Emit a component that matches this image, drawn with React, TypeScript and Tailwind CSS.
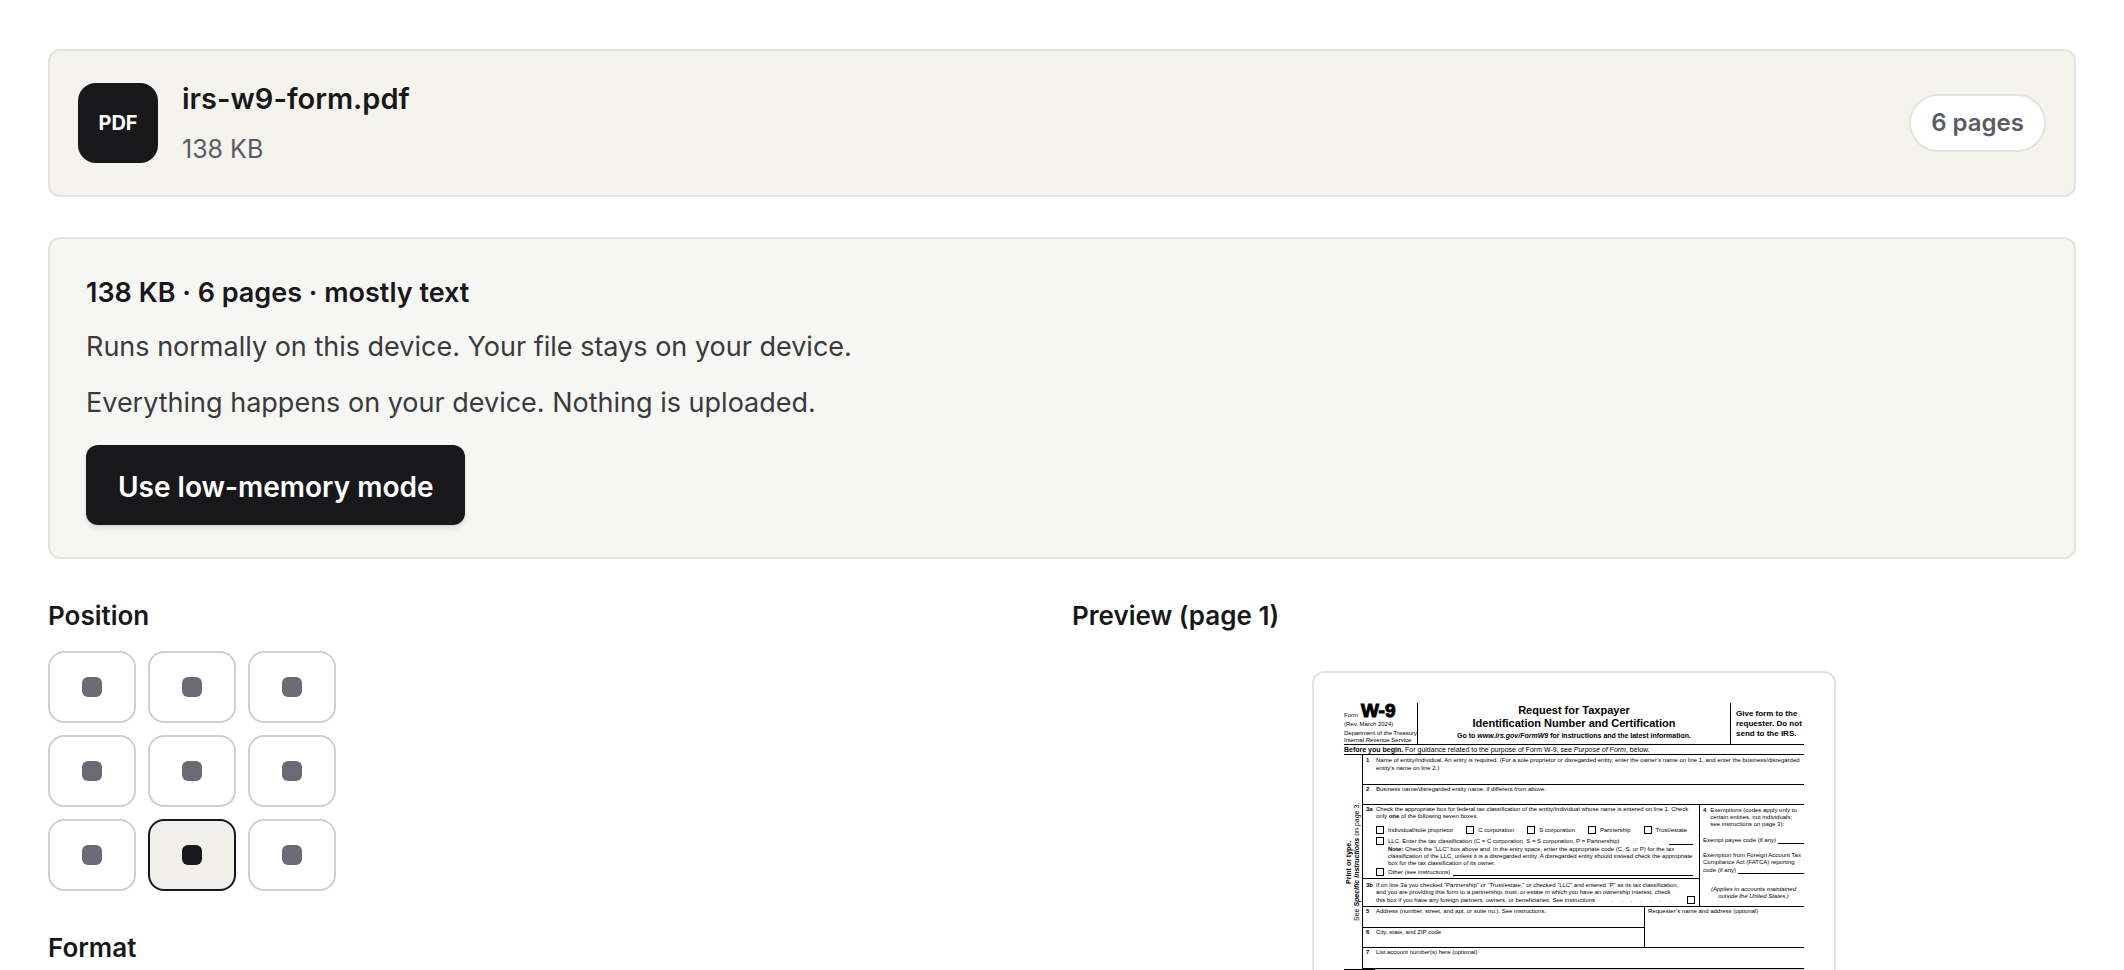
import { useState, type ReactNode } from "react";

const positions = [
  "Top left",
  "Top center",
  "Top right",
  "Middle left",
  "Middle center",
  "Middle right",
  "Bottom left",
  "Bottom center",
  "Bottom right",
];

function FileCard() {
  return (
    <section className="flex items-center justify-between rounded-xl border-2 border-[#e4e4df] bg-[#f4f3ee] px-7 py-8">
      <div className="flex items-center gap-6">
        <div className="flex size-20 items-center justify-center rounded-[18px] bg-[#18181a] text-[20px] font-bold text-white">
          PDF
        </div>
        <div>
          <h1 className="text-[29px] leading-8 font-semibold text-[#18181a]">irs-w9-form.pdf</h1>
          <p className="mt-5 text-[25px] leading-7 text-[#5b5a66]">138 KB</p>
        </div>
      </div>
      <span className="rounded-full border-2 border-[#e4e4df] bg-white px-5 py-3 text-[24px] leading-[30px] font-semibold text-[#5b5a66]">
        6 pages
      </span>
    </section>
  );
}

function DeviceCard() {
  return (
    <section className="mt-10 rounded-xl border-2 border-[#e4e4df] bg-[#f6f6f4] px-9 pt-9 pb-8 text-[27px] leading-10 text-[#3a3a3d]">
      <p className="leading-9 font-semibold text-[#18181a]">138 KB · 6 pages · mostly text</p>
      <p className="mt-4">Runs normally on this device. Your file stays on your device.</p>
      <p className="mt-4">Everything happens on your device. Nothing is uploaded.</p>
      <button
        type="button"
        className="mt-[22px] flex h-20 items-center rounded-xl bg-[#18181a] px-8 pt-1 text-[28px] font-semibold text-white shadow-md"
      >
        Use low-memory mode
      </button>
    </section>
  );
}

function PositionPicker() {
  const [selected, setSelected] = useState("Bottom center");
  return (
    <div role="group" aria-labelledby="position-label" className="mt-[18px] grid w-fit grid-cols-3 gap-3">
      {positions.map((name) => {
        const active = name === selected;
        return (
          <button
            key={name}
            type="button"
            aria-label={name}
            aria-pressed={active}
            onClick={() => setSelected(name)}
            className={
              active
                ? "flex h-[72px] w-[88px] items-center justify-center rounded-2xl border-2 border-[#18181a] bg-[#f0efeb]"
                : "flex h-[72px] w-[88px] items-center justify-center rounded-2xl border-2 border-[#d0d0c8] bg-white"
            }
          >
            <span className={active ? "size-5 rounded-md bg-[#18181a]" : "size-5 rounded-md bg-[#6b6a75]"} />
          </button>
        );
      })}
    </div>
  );
}

function Row({ n, className, children }: { n: string; className: string; children: ReactNode }) {
  return (
    <div className={`flex border-b border-black ${className}`}>
      <b className="w-[13px] shrink-0 pl-[3px]">{n}</b>
      <div className="min-w-0 flex-1">{children}</div>
    </div>
  );
}

function Box({ children }: { children?: ReactNode }) {
  return (
    <span className="flex items-center gap-1">
      <span className="size-2 shrink-0 border border-black" />
      {children}
    </span>
  );
}

function FormPage() {
  return (
    <article className="w-[524px] overflow-hidden rounded-xl border-2 border-[#e4e4df] bg-white px-[30px] pt-[30px] pb-10 font-['Liberation_Sans',Arial,sans-serif] text-[6px] leading-[7px] whitespace-nowrap text-black">
      <header className="flex h-[42px] border-b border-black">
        <div className="w-[74px] border-r border-black">
          <div className="flex items-end gap-[3px]">
            <span>Form</span>
            <b className="text-[19px] leading-4 [-webkit-text-stroke:1px_black]">W-9</b>
          </div>
          <p className="pt-[2px]">(Rev. March 2024)</p>
          <p className="pt-[2px]">Department of the Treasury</p>
          <p>Internal Revenue Service</p>
        </div>
        <div className="flex-1 pt-px text-center font-bold">
          <p className="text-[11px] leading-[13px]">Request for Taxpayer</p>
          <p className="text-[11px] leading-[13px]">Identification Number and Certification</p>
          <p className="pt-[2px] text-[7px] leading-2">
            Go to <i>www.irs.gov/FormW9</i> for instructions and the latest information.
          </p>
        </div>
        <div className="w-[74px] border-l border-black pt-[6px] pl-[5px] text-[8px] leading-[10px] font-bold">
          <p>Give form to the</p>
          <p>requester. Do not</p>
          <p>send to the IRS.</p>
        </div>
      </header>
      <p className="h-[10px] border-b border-black text-[7px] leading-[9px]">
        <b>Before you begin.</b> For guidance related to the purpose of Form W-9, see <i>Purpose of Form</i>, below.
      </p>
      <div className="flex">
        <div className="flex w-[19px] rotate-180 items-center justify-center border-l border-black leading-2 [writing-mode:vertical-rl]">
          <div className="text-center text-[7px]">
            <b>Print or type.</b>
            <br />
            See <b><i>Specific Instructions</i></b> on page 3.
          </div>
        </div>
        <div className="min-w-0 flex-1">
          <Row n="1" className="h-[30px] pt-px leading-2">
            Name of entity/individual. An entry is required. (For a sole proprietor or disregarded entity, enter the owner’s name on line 1, and enter the business/disregarded
            <br />
            entity’s name on line 2.)
          </Row>
          <Row n="2" className="h-5 pt-px">Business name/disregarded entity name, if different from above.</Row>
          <div className="flex">
            <div className="min-w-0 flex-1">
              <Row n="3a" className="h-[74px] pt-px">
                <p>Check the appropriate box for federal tax classification of the entity/individual whose name is entered on line 1. Check</p>
                <p>
                  only <b>one</b> of the following seven boxes.
                </p>
                <div className="flex justify-between pt-[6px] pr-3 leading-2">
                  <Box>Individual/sole proprietor</Box>
                  <Box>C corporation</Box>
                  <Box>S corporation</Box>
                  <Box>Partnership</Box>
                  <Box>Trust/estate</Box>
                </div>
                <div className="flex items-end justify-between pt-[3px] pr-[6px] leading-2">
                  <Box>LLC. Enter the tax classification (C = C corporation, S = S corporation, P = Partnership)</Box>
                  <span className="flex gap-2">
                    <span>.</span>
                    <span>.</span>
                    <span>.</span>
                  </span>
                  <span className="w-6 border-b border-black" />
                </div>
                <div className="pt-px pl-3">
                  <p>
                    <b>Note:</b> Check the “LLC” box above and, in the entry space, enter the appropriate code (C, S, or P) for the tax
                  </p>
                  <p>classification of the LLC, unless it is a disregarded entity. A disregarded entity should instead check the appropriate</p>
                  <p>box for the tax classification of its owner.</p>
                </div>
                <div className="flex items-end gap-[3px] pt-px pr-[6px] leading-2">
                  <Box>Other (see instructions)</Box>
                  <span className="flex-1 border-b border-black" />
                </div>
              </Row>
              <Row n="3b" className="h-7 pt-[3px]">
                <p>If on line 3a you checked “Partnership” or “Trust/estate,” or checked “LLC” and entered “P” as its tax classification,</p>
                <p>and you are providing this form to a partnership, trust, or estate in which you have an ownership interest, check</p>
                <div className="flex items-end justify-between pr-1">
                  <span>this box if you have any foreign partners, owners, or beneficiaries. See instructions</span>
                  <span className="flex gap-2">
                    <span>.</span>
                    <span>.</span>
                    <span>.</span>
                    <span>.</span>
                    <span>.</span>
                    <span>.</span>
                    <span>.</span>
                  </span>
                  <Box />
                </div>
              </Row>
            </div>
            <div className="w-[105px] border-b border-l border-black pt-[2px] pl-[3px]">
              <div className="flex gap-1">
                <b>4</b>
                <p>
                  Exemptions (codes apply only to
                  <br />
                  certain entities, not individuals;
                  <br />
                  see instructions on page 3):
                </p>
              </div>
              <div className="flex gap-[2px] pt-[9px]">
                Exempt payee code (if any)
                <span className="flex-1 border-b border-black" />
              </div>
              <p className="pt-2">
                Exemption from Foreign Account Tax
                <br />
                Compliance Act (FATCA) reporting
              </p>
              <div className="flex gap-[2px] pt-px">
                code (if any)
                <span className="flex-1 border-b border-black" />
              </div>
              <p className="pt-3 text-center italic">
                (Applies to accounts maintained
                <br />
                outside the United States.)
              </p>
            </div>
          </div>
          <div className="flex">
            <div className="min-w-0 flex-1">
              <Row n="5" className="h-[21px] pt-px">Address (number, street, and apt. or suite no.). See instructions.</Row>
              <Row n="6" className="h-5 pt-px">City, state, and ZIP code</Row>
            </div>
            <p className="w-[160px] border-b border-l border-black pt-px pl-[3px]">Requester’s name and address (optional)</p>
          </div>
          <Row n="7" className="h-[21px] pt-px">List account number(s) here (optional)</Row>
        </div>
      </div>
      <div className="flex items-center gap-3 border-b border-black bg-[#d4d4d4] text-[9px] leading-[14px] font-bold">
        <span className="bg-black px-1 text-white">Part I</span>
        Taxpayer Identification Number (TIN)
      </div>
    </article>
  );
}

export default function App() {
  return (
    <main className="h-screen overflow-hidden bg-white px-12 pt-[49px] font-[Inter,'Noto_Sans',sans-serif] text-[#18181a]">
      <FileCard />
      <DeviceCard />
      <div className="mt-10 grid grid-cols-2 gap-5">
        <section>
          <h2 id="position-label" className="text-[26px] leading-[34px] font-semibold">Position</h2>
          <PositionPicker />
          <h2 className="mt-10 text-[26px] leading-[34px] font-semibold">Format</h2>
        </section>
        <section>
          <h2 className="text-[26px] leading-[34px] font-semibold">Preview (page 1)</h2>
          <div className="mt-[38px] flex justify-center">
            <FormPage />
          </div>
        </section>
      </div>
    </main>
  );
}
